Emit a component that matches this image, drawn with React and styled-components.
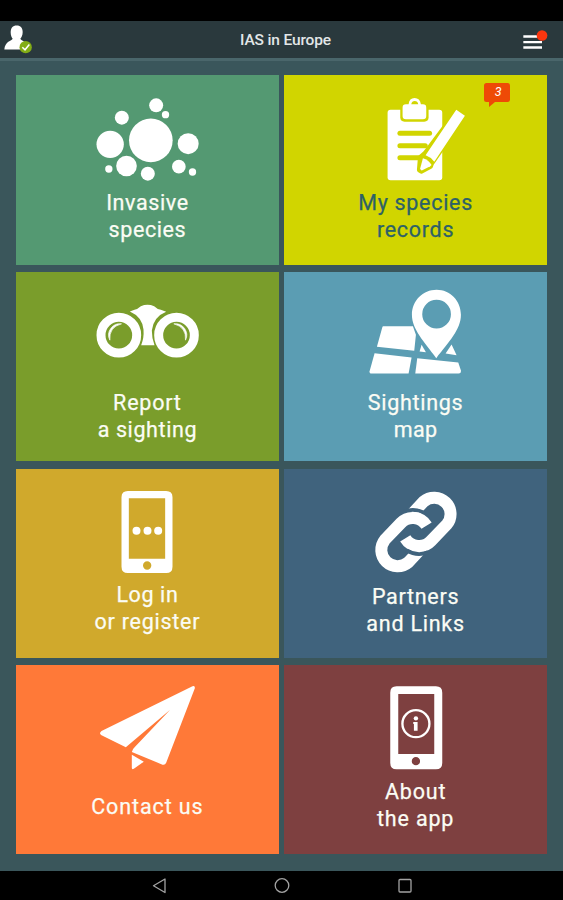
import React from 'react';
import styled, { createGlobalStyle } from 'styled-components';

const GlobalStyle = createGlobalStyle`
  * {
    box-sizing: border-box;
  }
  body {
    margin: 0;
    background-color: #000;
    font-family: Roboto, 'Liberation Sans', sans-serif;
  }
`;

const Screen = styled.div`
  display: flex;
  flex-direction: column;
  height: 100vh;
  background-color: #3a565b;
`;

const StatusBar = styled.div`
  height: 21.4px;
  background-color: #000;
`;

const Header = styled.header`
  display: grid;
  grid-template-columns: 40px 1fr 40px;
  height: 40px;
  background-color: #2a393d;
  border-bottom: 3px solid #4a666b;
`;

const HeaderTitle = styled.h1`
  margin: 0;
  padding-left: 8px;
  color: #e3e7e8;
  font-size: 15.5px;
  font-weight: 500;
  letter-spacing: -0.15px;
  line-height: 39px;
  text-align: center;
`;

const HeaderIcon = styled.svg`
  display: block;
  width: 40px;
  height: 37px;
`;

const TileGrid = styled.main`
  display: grid;
  flex: 1;
  grid-template-columns: 1fr 1fr;
  grid-template-rows: repeat(4, 1fr);
  gap: 7.3px 5.4px;
  padding: 14px 16px 16.7px;
`;

const TileButton = styled.button`
  position: relative;
  display: flex;
  flex-direction: column;
  align-items: center;
  min-height: 0;
  padding: 0;
  border: none;
  background-color: ${(props) => props.$bg};
  color: ${(props) => props.$color || '#fbfcf4'};
  font-family: inherit;
`;

const TileIcon = styled.svg`
  display: block;
  flex: none;
  width: 140px;
  height: 110px;
`;

const TileLabel = styled.span`
  display: flex;
  flex-direction: column;
  align-items: center;
  margin-top: ${(props) => props.$top}px;
  font-size: 21.5px;
  font-weight: 400;
  line-height: 27px;
  white-space: nowrap;
  -webkit-text-stroke: 0.25px currentColor;
`;

const LabelLine = styled.span`
  letter-spacing: ${(props) => props.$spacing}px;
`;

const CountBadge = styled.span`
  position: absolute;
  top: 7.5px;
  right: 37.5px;
  width: 25.5px;
  height: 19.5px;
  border-radius: 2.5px;
  background-color: #ee4a06;
  color: #fff;
  font-size: 12.5px;
  font-style: italic;
  line-height: 18px;
  padding-left: 3px;
  text-align: center;

  &::after {
    content: '';
    position: absolute;
    top: 19px;
    left: 4.5px;
    border-top: 5px solid #ee4a06;
    border-right: 6px solid transparent;
  }
`;

const NavBar = styled.nav`
  display: flex;
  justify-content: center;
  gap: 99px;
  height: 29px;
  background-color: #000;
`;

const NavIcon = styled.svg`
  width: 24px;
  height: 29px;
  fill: none;
  stroke: #a3a3a3;
  stroke-width: 1.3;
`;

function SpeciesIcon() {
  return (
    <TileIcon viewBox="-8.5 -31 420 330" fill="#fff">
      <circle cx="213" cy="165" r="65.5" />
      <circle cx="91" cy="177" r="41" />
      <circle cx="126" cy="97" r="21" />
      <circle cx="229" cy="60" r="21" />
      <circle cx="257" cy="88" r="11" />
      <circle cx="325" cy="175" r="31.5" />
      <circle cx="140" cy="242" r="31" />
      <circle cx="87" cy="251" r="11" />
      <circle cx="204" cy="265" r="21" />
      <circle cx="297" cy="244" r="20.5" />
      <circle cx="338" cy="260" r="11" />
    </TileIcon>
  );
}

function RecordsIcon() {
  return (
    <TileIcon viewBox="2.25 -31 420 330" fill="#fff">
      <path d="M136 73H282Q291 73 291 82V276Q291 285 282 285H136Q127 285 127 276V82Q127 73 136 73Z" />
      <path
        d="M165 60H250V96Q250 109 237 109H178Q165 109 165 96Z"
        fill="#d1d500"
      />
      <path
        d="M182 57H190Q192 38 208 38Q224 38 227 57H233Q243 57 243 67V92Q243 102 233 102H182Q172 102 172 92V67Q172 57 182 57ZM198 57H219Q217 47 208.500 47Q200 47 198 57Z"
        fillRule="evenodd"
      />
      <g stroke="#d1d500" strokeWidth="15" strokeLinecap="round">
        <path d="M164 144H253" />
        <path d="M164 181H240" />
        <path d="M164 217H236" />
      </g>
      <path
        d="M335 76L358 91L259 235L256 243L228 258L222 254L225 216L239 204Z"
        fill="#d1d500"
        stroke="#d1d500"
        strokeWidth="14"
        strokeLinejoin="round"
      />
      <path d="M333 73L359 91L267 229Q256 215 241 210Z" />
      <path d="M233 219Q250 224 259 239L255 243L231 255Q225 256 225 249Z" />
    </TileIcon>
  );
}

function BinocularsIcon() {
  return (
    <TileIcon viewBox="-7.5 -55.5 420 330" fill="#fff">
      <path d="M151 63L165 58Q175 55 184 47Q204 39 224 47Q232 55 244 58L260 64Q222 79 217 120Q217 145 225 164H185Q194 142 192 117Q188 79 151 63Z" />
      <g fill="none" stroke="#fff">
        <circle cx="118" cy="134" r="53.500" strokeWidth="27" />
        <circle cx="291" cy="134" r="53.500" strokeWidth="27" />
      </g>
      <path d="M126 100A34 34 0 0 0 91 149Q88 110 126 100Z" stroke="#fff" strokeWidth="2" />
      <path d="M283 100A34 34 0 0 1 318 149Q321 110 283 100Z" stroke="#fff" strokeWidth="2" />
    </TileIcon>
  );
}

function MapIcon() {
  return (
    <TileIcon viewBox="2.25 -25.5 420 330" fill="#fff">
      <path d="M114 137H203L212 163L207 211L95 199L111 141Q112 137 114 137Z" />
      <path d="M88 218L199 231L190 279H79Q72 279 73 272Z" />
      <path d="M216 233L339 246L347 270Q348 279 340 279H210Z" />
      <path d="M229 193L242 215L223 213Z" />
      <path d="M319 192L334 224L301 219Z" />
      <path
        d="M274 28C233 28 200 61 200 103C200 147 237 184 273 233C311 184 347 147 347 103C347 61 315 28 274 28ZM274 58A43 43 0 1 1 274 144A43 43 0 1 1 274 58Z"
        fillRule="evenodd"
      />
    </TileIcon>
  );
}

function LoginIcon() {
  return (
    <TileIcon viewBox="-7.5 -35 420 330" fill="#fff">
      <path
        d="M145 31H260Q279 31 279 50V258Q279 277 260 277H145Q126 277 126 258V50Q126 31 145 31ZM148 53V234H257V53ZM203 242A12.500 12.500 0 1 0 203 267A12.500 12.500 0 1 0 203 242Z"
        fillRule="evenodd"
      />
      <circle cx="171" cy="150" r="12" />
      <circle cx="204" cy="150" r="12" />
      <circle cx="236" cy="150" r="12" />
    </TileIcon>
  );
}

function LinksIcon() {
  return (
    <TileIcon viewBox="2.25 -35 420 330" fill="none">
      <path
        d="M203 97L235 63A49 49 0 0 1 305 131L257 181A49 49 0 0 1 180 173"
        stroke="#fff"
        strokeWidth="36"
      />
      <path d="M176 93A73 73 0 0 1 240 99" stroke="#40637d" strokeWidth="11" />
      <path
        d="M221 211L189 245A49 49 0 0 1 119 177L167 127A49 49 0 0 1 244 135"
        stroke="#fff"
        strokeWidth="36"
      />
      <path d="M248 215A73 73 0 0 1 184 209" stroke="#40637d" strokeWidth="11" />
    </TileIcon>
  );
}

function ContactIcon() {
  return (
    <TileIcon viewBox="-7.5 -30 420 330" fill="#fff">
      <path d="M339 34Q347 31 346 40L260 263Q257 271 249 269L157 231Q158 223 166 216L272 104L139 217L66 181Q57 175 66 168Z" />
      <path d="M157 239L193 260L163 281Q157 285 157 278Z" />
    </TileIcon>
  );
}

function AboutIcon() {
  return (
    <TileIcon viewBox="2.25 -30 420 330" fill="#fff">
      <path
        d="M154 34H272Q291 34 291 53V264Q291 283 272 283H154Q135 283 135 264V53Q135 34 154 34ZM159 57V237H267V57ZM212 246A12.500 12.500 0 1 0 212 271A12.500 12.500 0 1 0 212 246Z"
        fillRule="evenodd"
      />
      <circle cx="212" cy="146" r="40.500" fill="none" stroke="#fff" strokeWidth="7" />
      <circle cx="212" cy="130" r="6.500" />
      <path d="M204 141H217V167H206V147H204Z" />
    </TileIcon>
  );
}

const tiles = [
  { bg: '#549972', Icon: SpeciesIcon, top: 3.4, lines: [['Invasive', 0.6], ['species', 0.6]] },
  {
    bg: '#d1d500',
    color: '#2d6168',
    Icon: RecordsIcon,
    top: 3.4,
    count: 3,
    lines: [['My species', 0.7], ['records', 0.7]],
  },
  { bg: '#7a9d2b', Icon: BinocularsIcon, top: 7, lines: [['Report', 0.8], ['a sighting', 0.6]] },
  { bg: '#5b9db3', Icon: MapIcon, top: 7, lines: [['Sightings', 0.7], ['map', 0.4]] },
  { bg: '#d0a92c', Icon: LoginIcon, top: 2.7, lines: [['Log in', 0.6], ['or register', 0.75]] },
  { bg: '#40637d', Icon: LinksIcon, top: 4.4, lines: [['Partners', 0.7], ['and Links', 0.75]] },
  { bg: '#ff7938', Icon: ContactIcon, top: 18, lines: [['Contact us', 0.9]] },
  { bg: '#7e4040', Icon: AboutIcon, top: 2.7, lines: [['About', 0.8], ['the app', 0.85]] },
];

function Tile({ bg, color, Icon, top, count, lines }) {
  return (
    <TileButton $bg={bg} $color={color}>
      <Icon />
      <TileLabel $top={top}>
        {lines.map(([text, spacing]) => (
          <LabelLine key={text} $spacing={spacing}>
            {text}
          </LabelLine>
        ))}
      </TileLabel>
      {count && <CountBadge>{count}</CountBadge>}
    </TileButton>
  );
}

function App() {
  return (
    <Screen>
      <GlobalStyle />
      <StatusBar />
      <Header>
        <HeaderIcon viewBox="0 62.500 120 111">
          <path
            d="M50 76C62 76 68 84 68 96C68 106 64 111 61 116C63 122 84 124 87 148H13C15 124 35 122 38 116C35 111 32 106 32 96C32 84 38 76 50 76Z"
            fill="#fff"
          />
          <circle cx="77" cy="141" r="18.500" fill="#83ad16" />
          <path d="M67 141L75 149L88 133" fill="none" stroke="#fff" strokeWidth="4.500" />
        </HeaderIcon>
        <HeaderTitle>IAS in Europe</HeaderTitle>
        <HeaderIcon viewBox="726 63.500 120 111">
          <path
            d="M727 110H783M727 127H783M727 143H783"
            fill="none"
            stroke="#fff"
            strokeWidth="7"
          />
          <circle cx="783" cy="107" r="16" fill="#fb360f" />
        </HeaderIcon>
      </Header>
      <TileGrid>
        {tiles.map((tile) => (
          <Tile key={tile.bg} {...tile} />
        ))}
      </TileGrid>
      <NavBar>
        <NavIcon viewBox="0 0 24 29">
          <path d="M18 8V21.500L6.500 14.700Z" strokeLinejoin="round" />
        </NavIcon>
        <NavIcon viewBox="0 0 24 29">
          <circle cx="12" cy="14.500" r="6.800" />
        </NavIcon>
        <NavIcon viewBox="0 0 24 29">
          <rect x="6" y="8.500" width="12" height="12.500" rx="1" />
        </NavIcon>
      </NavBar>
    </Screen>
  );
}

export default App;
